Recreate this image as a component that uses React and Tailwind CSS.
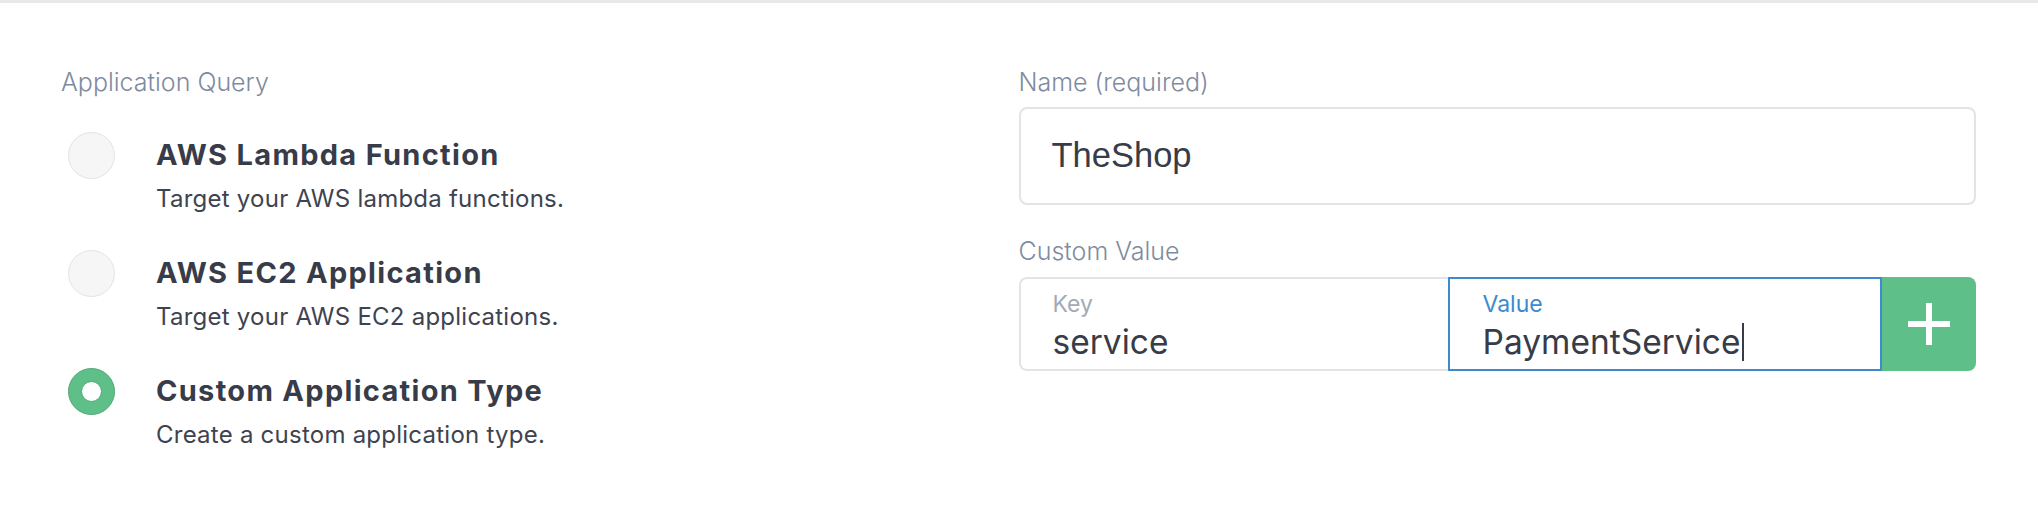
import React from "react";

const sans = { fontFamily: "Inter, 'Noto Sans', sans-serif" };

function Radio({ selected }) {
  if (selected) {
    return (
      <div className="w-[47px] h-[47px] rounded-full bg-[#5ebf89] border border-[#4fa877] flex items-center justify-center">
        <div className="w-[21px] h-[21px] rounded-full bg-white border border-[#4fa877]" />
      </div>
    );
  }
  return <div className="w-[47px] h-[47px] rounded-full bg-[#f6f6f6] border-[1.5px] border-[#e3e3e3]" />;
}

function Option({ title, desc, selected }) {
  return (
    <div className="flex items-start">
      <div className="w-[95px] h-[46px] flex items-center pl-[7px]">
        <Radio selected={selected} />
      </div>
      <div>
        <div className="h-[46px] leading-[46px] text-[29px] tracking-[0.045em] font-bold text-[#373c48]">{title}</div>
        <div className="mt-[6px] leading-[30px] text-[24px] tracking-[0.01em] text-[#3e4350]">{desc}</div>
      </div>
    </div>
  );
}

export default function App() {
  return (
    <div className="w-[2038px] h-[516px] bg-white border-t-[3px] border-[#e8e8e8]" style={sans}>
      <div className="grid grid-cols-2 pl-[61px] pr-[62px] pt-[65px]">
        <div>
          <div className="h-[28px] leading-[28px] text-[25px] font-light text-[#7f8ba0]">Application Query</div>
          <div className="mt-[36px] flex flex-col gap-[36px]">
            <Option title="AWS Lambda Function" desc="Target your AWS lambda functions." />
            <Option title="AWS EC2 Application" desc="Target your AWS EC2 applications." />
            <Option title="Custom Application Type" desc="Create a custom application type." selected />
          </div>
        </div>
        <div>
          <div className="h-[28px] leading-[28px] text-[25px] font-light text-[#7f8ba0]">Name (required)</div>
          <div className="mt-[11px] h-[98px] rounded-[8px] border-2 border-[#e4e4e4] pl-[31px] flex items-center">
            <span
              className="text-[34.5px] text-[#373c48]"
              style={{ fontFamily: "'Liberation Sans', Arial, sans-serif" }}
            >
              TheShop
            </span>
          </div>
          <div className="mt-[32px] h-[28px] leading-[28px] text-[25px] font-light text-[#7f8ba0]">Custom Value</div>
          <div className="mt-[12px] flex h-[94px]">
            <div className="w-[429px] border-2 border-r-0 border-[#e4e4e4] rounded-l-[8px] pl-[32px] pt-[12px] flex flex-col">
              <div className="leading-[26px] text-[23px] text-[#a3aab7]">Key</div>
              <div className="mt-[5px] leading-[40px] text-[33.5px] text-[#373c48]">service</div>
            </div>
            <div className="flex-1 border-2 border-[#3d8bcd] pl-[33px] pt-[12px] flex flex-col">
              <div className="leading-[26px] text-[23px] text-[#3b8bd0]">Value</div>
              <div className="mt-[5px] leading-[40px] text-[33.5px] text-[#373c48] flex items-center">
                <span>PaymentService</span>
                <span className="inline-block w-[2px] h-[38px] bg-[#373c48] ml-[2px]" />
              </div>
            </div>
            <div className="w-[94px] bg-[#5ebf89] rounded-r-[8px] flex items-center justify-center">
              <svg width="42" height="42" viewBox="0 0 42 42">
                <rect x="18" y="0" width="6" height="42" fill="white" />
                <rect x="0" y="18" width="42" height="6" fill="white" />
              </svg>
            </div>
          </div>
        </div>
      </div>
    </div>
  );
}
